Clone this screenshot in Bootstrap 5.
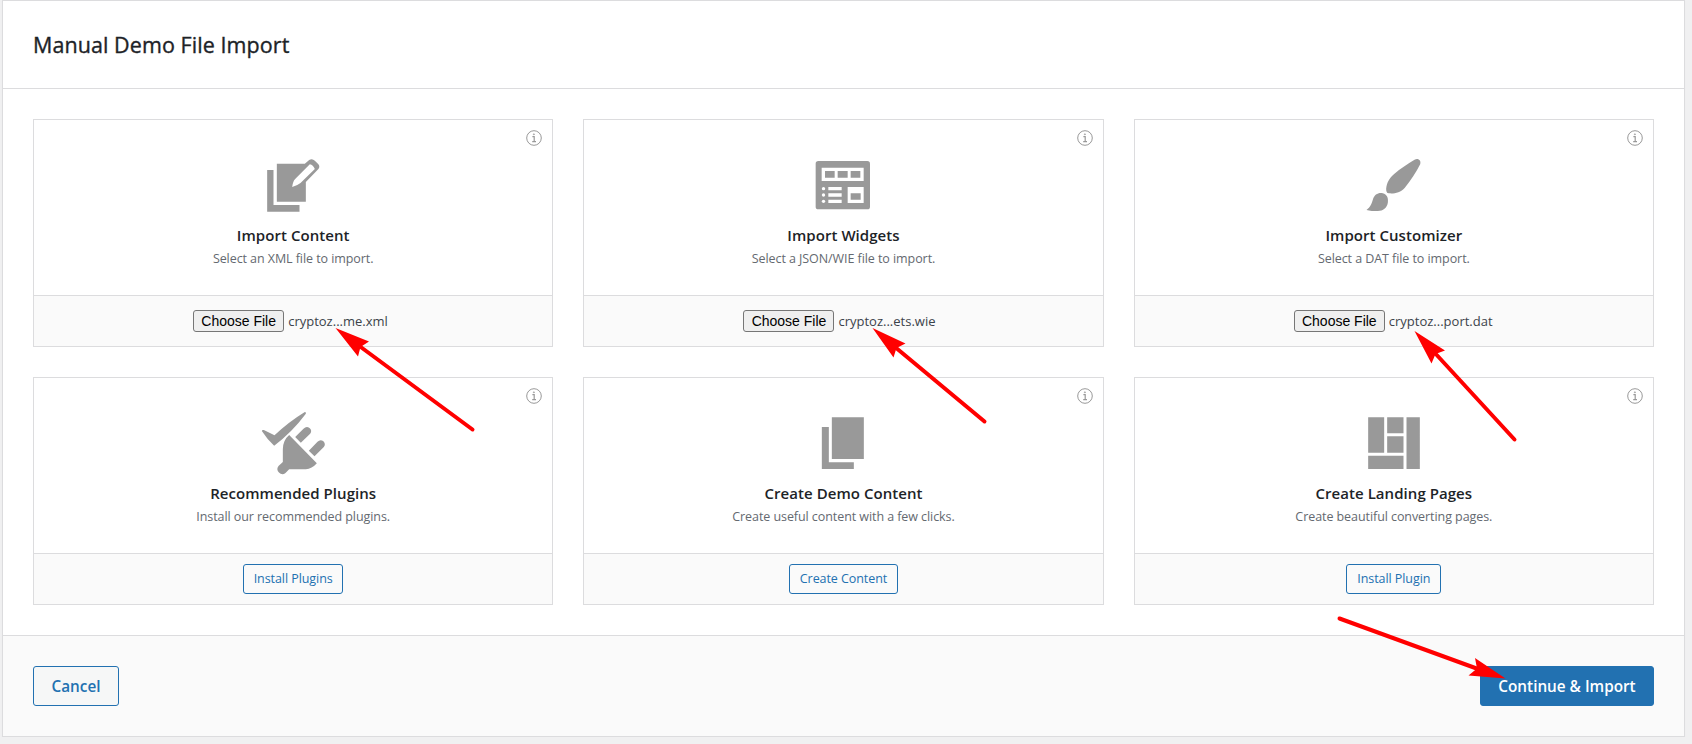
<!DOCTYPE html>
<html lang="en">
<head>
<meta charset="utf-8">
<title>Manual Demo File Import</title>
<link href="https://cdn.jsdelivr.net/npm/bootstrap@5.3.0/dist/css/bootstrap.min.css" rel="stylesheet">
<style>
body{background:#f0f0f1;font-family:"Open Sans","Noto Sans",sans-serif;overflow:hidden;color:#3c434a}
.panel{margin:0 7px 0 2px;border:1px solid #dcdcde;box-shadow:0 1px 1px rgba(0,0,0,.04);background:#fff}
.panel-head{height:88px;padding:0 30px;border-bottom:1px solid #dcdcde}
.panel-head h1{font-size:21.5px;font-weight:500;letter-spacing:.07px;line-height:30px;color:#1d2327;white-space:nowrap;-webkit-text-stroke:.35px #1d2327}
.tiles{display:grid;grid-template-columns:repeat(3,minmax(0,1fr));gap:30px;padding:30px}
.tile{border:1px solid #dcdcde;border-radius:0;height:228px}
.tile .card-body{height:175px;padding:30px 0 0;flex:none}
.tile .card-footer{height:51px;padding:0;background:#fafafa;border-top:1px solid #dcdcde;border-radius:0}
.tile h2{font-size:15px;font-weight:600;letter-spacing:.05px;line-height:20px;margin:5px 0 0;color:#1d2327}
.tile p{font-size:12.5px;letter-spacing:-.07px;line-height:18px;margin:5px 0 0;color:#646970}
.art{width:80px;height:70px;fill:#999;display:block}
.art .hole{fill:#fff}
.info-dot{top:10px;right:10px;width:16px;height:16px;fill:none;stroke:#999}
.picker{width:200px;font-size:13px;color:#3c434a}
.picker button{width:91px;height:22px;font:14px/16px "Liberation Sans",Arial,sans-serif;color:#000;background:#efefef;border:1px solid #767676;border-radius:3px;padding:0;white-space:nowrap}
.picker span{margin-left:4px;line-height:18px;white-space:nowrap}
.btn-line{--bs-btn-color:#2271b1;--bs-btn-border-color:#2271b1;--bs-btn-border-radius:3px;font-size:12.5px;letter-spacing:-.07px;height:30px;line-height:28px;padding:0}
.w-a{width:100px}.w-b{width:109px}.w-c{width:95px}
.panel-foot{padding:30px;background:#fafafa;border-top:1px solid #dcdcde}
.btn-big{height:40px;line-height:38px;padding:0;font-size:15.3px;font-weight:600;--bs-btn-border-radius:3px}
.btn-cancel{width:86px;--bs-btn-color:#2271b1;--bs-btn-border-color:#2271b1;--bs-btn-bg:#f6f7f7}
.btn-go{width:174px;--bs-btn-color:#fff;--bs-btn-border-color:#2271b1;--bs-btn-bg:#2271b1}
.arrows{inset:0;width:1692px;height:744px;pointer-events:none;stroke:red;fill:red}
.arrows line{stroke-width:4;stroke-linecap:round}
.arrows path{stroke:none}
</style>
</head>
<body>
<svg class="d-none">
<symbol id="info" viewBox="0 0 16 16"><circle cx="8" cy="8" r="7.3"/><path d="M6.4 6.6H8.2V11.4M6.2 11.6H10" stroke-width="1.2"/><circle cx="7.9" cy="4.3" r=".5"/></symbol>
</svg>
<main class="panel">
<header class="panel-head d-flex align-items-center"><h1 class="m-0">Manual Demo File Import</h1></header>
<section class="tiles">
<article class="card tile text-center">
<svg class="info-dot position-absolute"><use href="#info"/></svg>
<div class="card-body d-flex flex-column align-items-center">
<svg class="art" viewBox="9.5 0 240 210"><path d="M52 60H71V165H149V185H52z"/><path d="M81 41H165L178 30Q187 24 195 32L205 42Q212 50 205 58L168 96V155H81z"/><path class="hole" d="M127 111Q129 94 136 87L180 43Q190 45 195 57L152 99Q142 107 127 111z"/></svg>
<h2>Import Content</h2><p>Select an XML file to import.</p></div>
<div class="card-footer d-flex justify-content-center align-items-center"><div class="picker d-flex align-items-center"><button>Choose File</button><span>cryptoz...me.xml</span></div></div>
</article>
<article class="card tile text-center">
<svg class="info-dot position-absolute"><use href="#info"/></svg>
<div class="card-body d-flex flex-column align-items-center">
<svg class="art" viewBox="10 0 240 210"><rect x="48" y="33" width="163" height="145" rx="8"/><path class="hole" d="M66 53H192V93H66zM86 111H126V121H86zM86 130H126V140H86zM86 149H126V159H86zM144 111H192V159H144z"/><g class="hole"><circle cx="71.500" cy="116" r="5"/><circle cx="71.500" cy="135" r="5"/><circle cx="71.500" cy="154" r="5"/></g><path d="M76 63H105V83H76zM114 63H144V83H114zM153 63H182V83H153zM153 130H183V149H153z"/></svg>
<h2>Import Widgets</h2><p>Select a JSON/WIE file to import.</p></div>
<div class="card-footer d-flex justify-content-center align-items-center"><div class="picker d-flex align-items-center"><button>Choose File</button><span>cryptoz...ets.wie</span></div></div>
</article>
<article class="card tile text-center">
<svg class="info-dot position-absolute"><use href="#info"/></svg>
<div class="card-body d-flex flex-column align-items-center">
<svg class="art" viewBox="11.500 0 240 210"><path d="M193 29C204 23 214 31 210 43C199 66 182 91 164 113C151 128 131 132 116 130C109 129 108 123 108 116C110 97 118 84 132 72C151 55 172 42 193 29z"/><path d="M49 180C61 170 64 162 68 149C73 133 85 127 98 130C110 133 115 144 113 158C110 174 99 182 83 183C71 183 58 183 49 180z"/></svg>
<h2>Import Customizer</h2><p>Select a DAT file to import.</p></div>
<div class="card-footer d-flex justify-content-center align-items-center"><div class="picker d-flex align-items-center"><button>Choose File</button><span>cryptoz...port.dat</span></div></div>
</article>
<article class="card tile text-center">
<svg class="info-dot position-absolute"><use href="#info"/></svg>
<div class="card-body d-flex flex-column align-items-center">
<svg class="art" viewBox="9.500 24 240 210"><path d="M36 93Q36 89 42 90L74 106Q116 66 165 36Q170 36 168 41Q127 96 73 137Q52 118 36 93z"/><path d="M118 105L201 190Q186 207 168 208H118L107 219A15 15 0 0 1 86 198L99 186V148Q99 121 118 105z"/><path d="M136 111L161 86Q170 77 179 84Q188 92 181 101L153 128zM177 152L203 125Q211 117 220 123Q229 132 222 141L194 169z"/></svg>
<h2>Recommended Plugins</h2><p>Install our recommended plugins.</p></div>
<div class="card-footer d-flex justify-content-center align-items-center"><button class="btn btn-line w-a">Install Plugins</button></div>
</article>
<article class="card tile text-center">
<svg class="info-dot position-absolute"><use href="#info"/></svg>
<div class="card-body d-flex flex-column align-items-center">
<svg class="art" viewBox="9.500 24 240 210"><path d="M66 81H87V187H162V207H66zM96 52H192V177H96z"/></svg>
<h2>Create Demo Content</h2><p>Create useful content with a few clicks.</p></div>
<div class="card-footer d-flex justify-content-center align-items-center"><button class="btn btn-line w-b">Create Content</button></div>
</article>
<article class="card tile text-center">
<svg class="info-dot position-absolute"><use href="#info"/></svg>
<div class="card-body d-flex flex-column align-items-center">
<svg class="art" viewBox="11.500 24 240 210"><path d="M54 52H102V158H54zM111 52H160V100H111zM111 109H160V158H111zM54 167H160V207H54zM169 52H209V207H169z"/></svg>
<h2>Create Landing Pages</h2><p>Create beautiful converting pages.</p></div>
<div class="card-footer d-flex justify-content-center align-items-center"><button class="btn btn-line w-c">Install Plugin</button></div>
</article>
</section>
<footer class="panel-foot d-flex justify-content-between"><button class="btn btn-big btn-cancel">Cancel</button><button class="btn btn-big btn-go">Continue &amp; Import</button></footer>
</main>
<svg class="arrows position-absolute" viewBox="0 0 1692 744">
<line x1="472.500" y1="429.500" x2="358" y2="345"/><path d="M335.500 328L369 341.500L360.500 347L358 356.500z"/>
<line x1="984.500" y1="421.500" x2="895" y2="347"/><path d="M872.500 328L905.500 343.500L896.500 348L893.500 357.500z"/>
<line x1="1514.500" y1="439.500" x2="1434" y2="352"/><path d="M1414.500 331L1445 350.500L1435.500 354L1431.500 363.500z"/>
<line x1="1339.500" y1="618.500" x2="1478" y2="669"/><path d="M1505.500 678.500L1475 658L1477 668.500L1468.500 675.500z"/>
</svg>
<script src="https://cdn.jsdelivr.net/npm/bootstrap@5.3.0/dist/js/bootstrap.bundle.min.js"></script>
</body>
</html>
